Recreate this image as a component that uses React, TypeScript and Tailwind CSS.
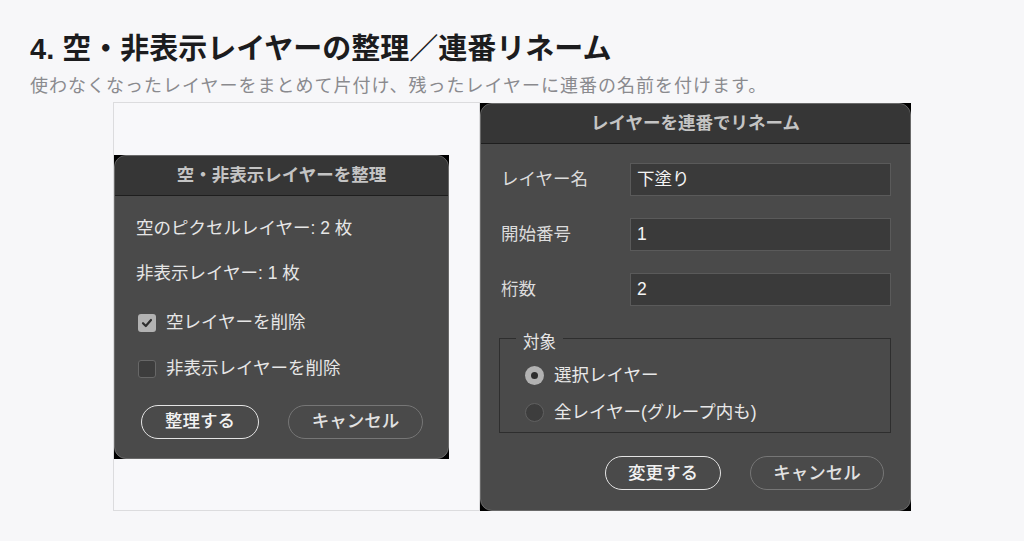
import React from "react";

const font = { fontFamily: '"Liberation Sans", "Noto Sans CJK JP", sans-serif' };

function Check({ checked }: { checked: boolean }) {
  return checked ? (
    <span className="flex h-[18px] w-[18px] items-center justify-center rounded-[3px] bg-[#b2b2b2]">
      <svg width="12" height="12" viewBox="0 0 12 12">
        <path d="M2 6.2 L4.8 9 L10 3" fill="none" stroke="#2e2e2e" strokeWidth="2.2" strokeLinecap="round" strokeLinejoin="round" />
      </svg>
    </span>
  ) : (
    <span className="block h-[18px] w-[18px] rounded-[3px] border border-[#676767] bg-[#3d3d3d]" />
  );
}

function Radio({ checked }: { checked: boolean }) {
  return checked ? (
    <span className="flex h-[19px] w-[19px] items-center justify-center rounded-full bg-[#b2b2b2]">
      <span className="block h-[7px] w-[7px] rounded-full bg-[#2e2e2e]" />
    </span>
  ) : (
    <span className="block h-[19px] w-[19px] rounded-full border border-[#606060] bg-[#3d3d3d]" />
  );
}

function Btn({ primary, w, children }: { primary?: boolean; w: string; children: React.ReactNode }) {
  return (
    <div
      className={
        "flex h-[34px] items-center justify-center rounded-full text-[17.5px] font-medium " +
        w +
        (primary ? " border-[1.5px] border-[#e4e4e4] text-[#f2f2f2]" : " border-[1.5px] border-[#767676] text-[#e2e2e2]")
      }
    >
      {children}
    </div>
  );
}

export default function App() {
  return (
    <div className="min-h-screen bg-[#f7f7f9]" style={font}>
      <div className="pl-[30px] pt-[31px]">
        <h1 className="text-[29px] font-bold leading-[36px] text-[#1c1c1e]">
          4.<span className="ml-[8px]">空・非表示レイヤーの整理／連番リネーム</span>
        </h1>
        <p className="mt-[7px] text-[18px] leading-[24px] tracking-[1px] text-[#8a8a8e]">
          使わなくなったレイヤーをまとめて片付け、残ったレイヤーに連番の名前を付けます。
        </p>
      </div>
      <div className="ml-[113px] mt-[4px] flex">
        <div className="flex h-[409px] w-[367px] items-center border border-[#dcdcde] bg-[#f8f8fa]">
          <div className="h-[304px] w-[335px] bg-black">
            <div className="flex h-full flex-col overflow-hidden rounded-[12px] border border-[#6a6a6a] bg-[#4a4a4a]">
              <div className="flex h-[40px] shrink-0 items-center justify-center border-b border-[#1e1e1e] bg-[#363636] text-[17.5px] font-bold text-[#c4c4c4]">
                空・非表示レイヤーを整理
              </div>
              <div className="flex flex-col pl-[21px] pt-[21px] text-[17.5px] text-[#e6e6e6]">
                <div className="flex h-[24px] items-center">空のピクセルレイヤー: 2 枚</div>
                <div className="mt-[21px] flex h-[24px] items-center">非表示レイヤー: 1 枚</div>
                <div className="mt-[25px] flex h-[24px] items-center gap-[10px] pl-[2px]">
                  <Check checked />
                  <span>空レイヤーを削除</span>
                </div>
                <div className="mt-[22px] flex h-[24px] items-center gap-[10px] pl-[2px]">
                  <Check checked={false} />
                  <span>非表示レイヤーを削除</span>
                </div>
                <div className="mt-[24px] flex gap-[29px] pl-[5px]">
                  <Btn primary w="w-[118px]">整理する</Btn>
                  <Btn w="w-[135px]">キャンセル</Btn>
                </div>
              </div>
            </div>
          </div>
        </div>
        <div className="mt-px h-[408px] w-[431px] bg-black">
          <div className="flex h-full flex-col overflow-hidden rounded-[12px] border border-[#6a6a6a] bg-[#4a4a4a]">
            <div className="flex h-[40px] shrink-0 items-center justify-center border-b border-[#1e1e1e] bg-[#363636] text-[17.5px] font-bold text-[#c4c4c4]">
              レイヤーを連番でリネーム
            </div>
            <div className="flex flex-col pt-[19px] text-[17.5px] text-[#dcdcdc]">
              {[
                ["レイヤー名", "下塗り", ""],
                ["開始番号", "1", "mt-[22px]"],
                ["桁数", "2", "mt-[22px]"],
              ].map(([label, value, mt]) => (
                <div key={label} className={"flex h-[33px] items-center " + mt}>
                  <span className="w-[149px] pl-[20px]">{label}</span>
                  <div className="flex h-[33px] w-[261px] items-center border border-[#5a5a5a] bg-[#3a3a3a] pl-[6px] text-[#f4f4f4]">
                    {value}
                  </div>
                </div>
              ))}
              <fieldset className="ml-[18px] mt-[18px] w-[392px] border border-[#2e2e2e] pb-[8px] pl-[25px]">
                <legend className="ml-[-9px] px-[7px] pt-[8px] text-[16.5px] leading-[20px] text-[#e6e6e6]">対象</legend>
                <div className="mt-[11px] flex h-[24px] items-center gap-[10px] text-[#e8e8e8]">
                  <Radio checked />
                  <span>選択レイヤー</span>
                </div>
                <div className="mt-[13px] flex h-[24px] items-center gap-[10px] text-[#e8e8e8]">
                  <Radio checked={false} />
                  <span>全レイヤー(グループ内も)</span>
                </div>
              </fieldset>
              <div className="mt-[23px] flex gap-[29px] pl-[124px]">
                <Btn primary w="w-[116px]">変更する</Btn>
                <Btn w="w-[134px]">キャンセル</Btn>
              </div>
            </div>
          </div>
        </div>
      </div>
    </div>
  );
}
